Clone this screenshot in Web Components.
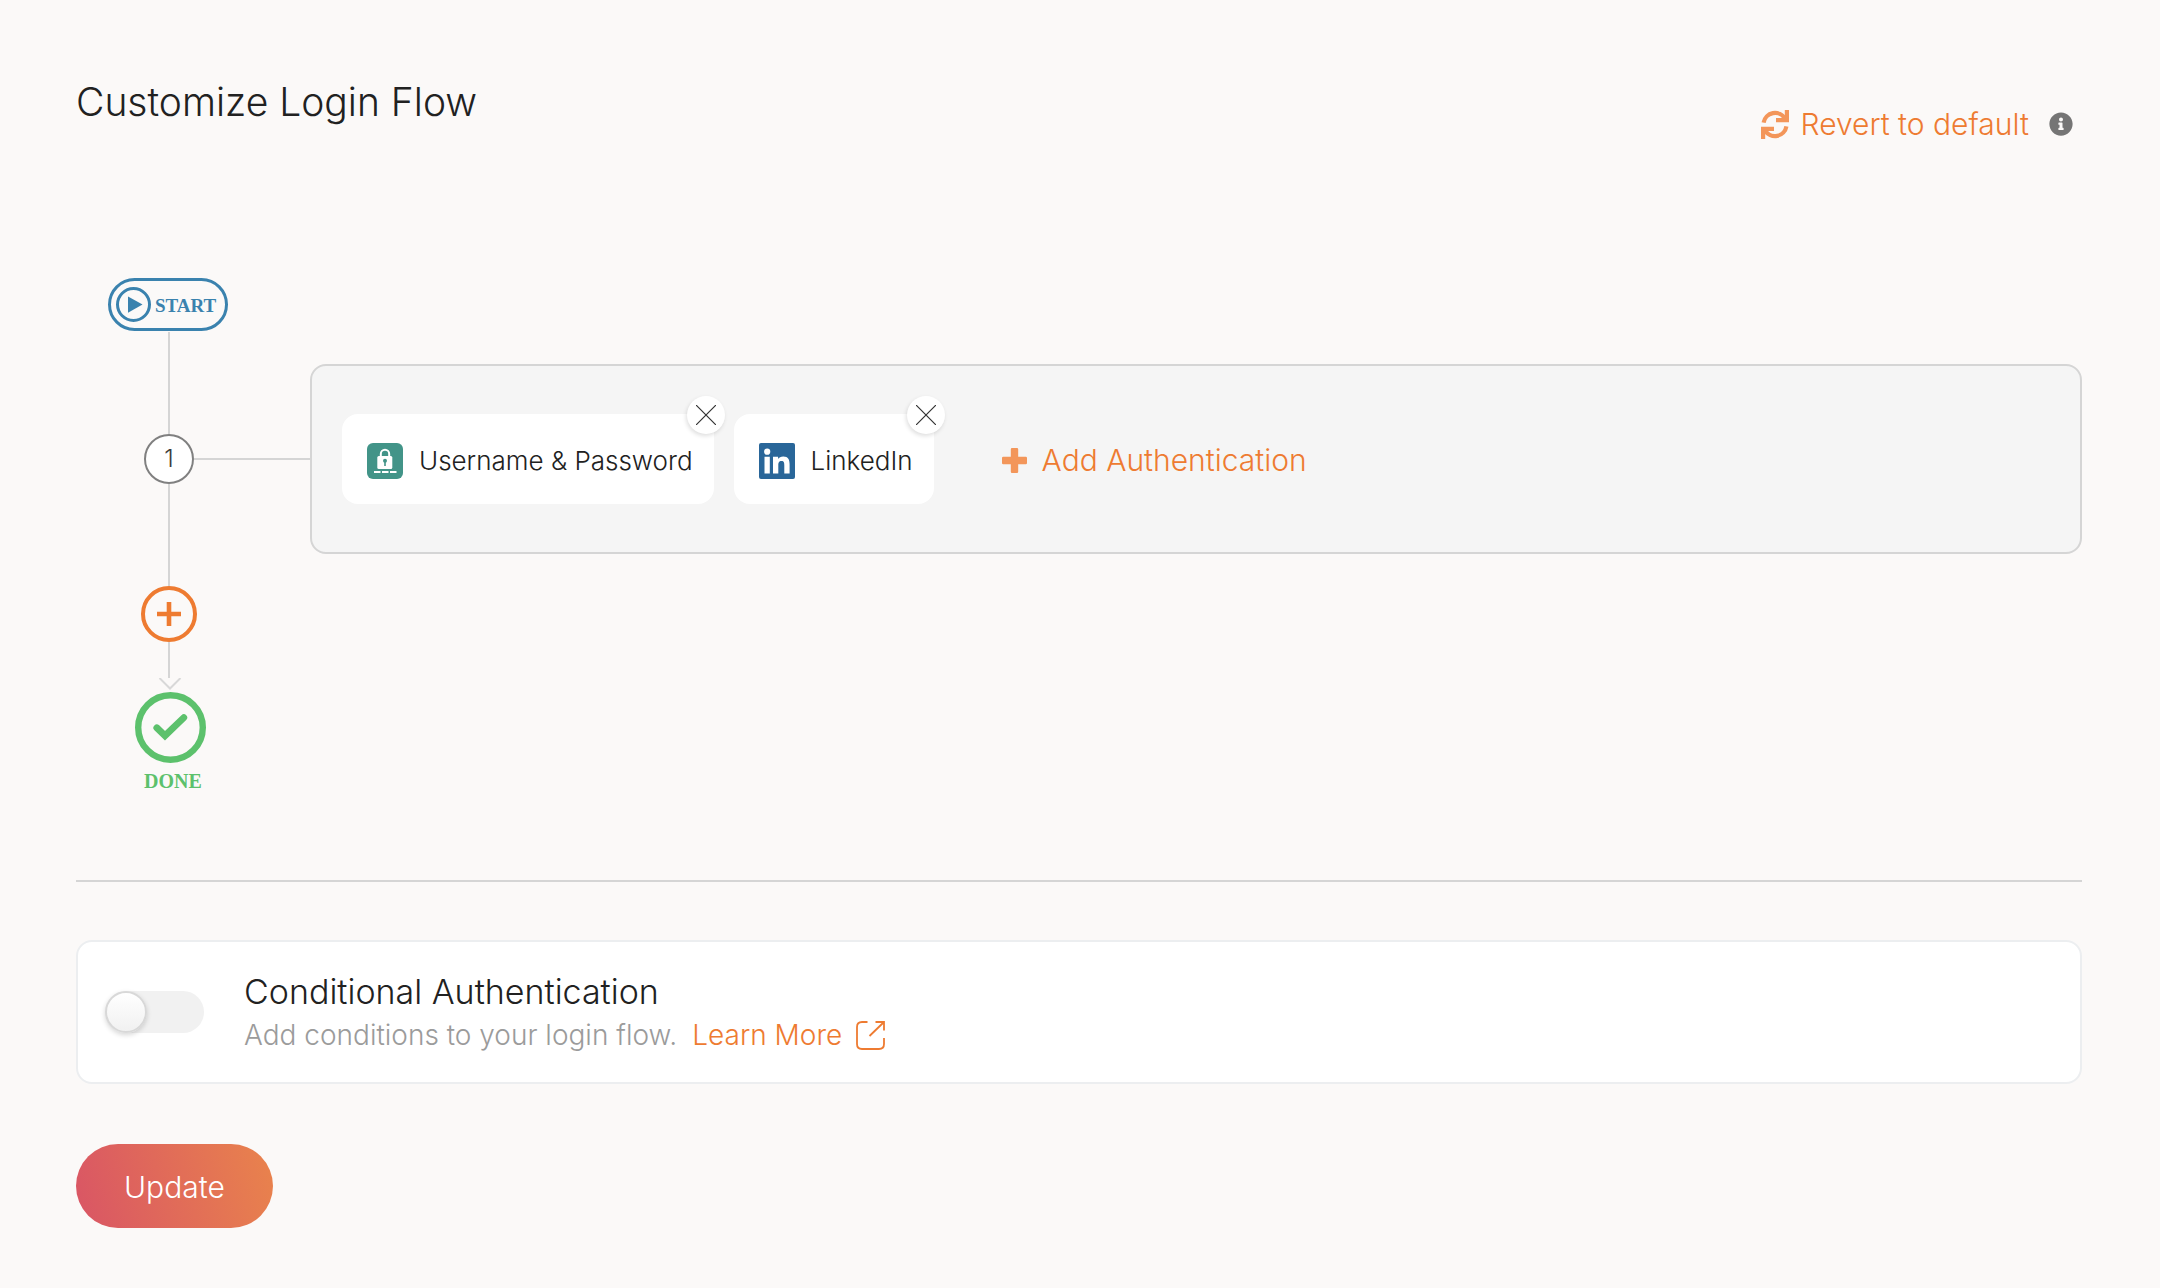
<!DOCTYPE html>
<html lang="en">
<head>
<meta charset="utf-8">
<title>Customize Login Flow</title>
<style>
  body {
    margin: 0;
    background: #fbf9f8;
    color: #212121;
    font-family: Inter, "Noto Sans", sans-serif;
    font-weight: 300;
    --accent: #ee7b31;
    --line: #d5d5d5;
  }
</style>
</head>
<body>
<login-flow-page></login-flow-page>
<script>
const define = (name, html, setup) => {
  const template = document.createElement('template');
  template.innerHTML = `<style>
    * { box-sizing: border-box; }
    button { font: inherit; color: inherit; background: none; border: 0; padding: 0; margin: 0; cursor: pointer; }
    svg { display: block; flex: none; }
  </style>` + html;
  customElements.define(name, class extends HTMLElement {
    constructor() {
      super();
      this.attachShadow({ mode: 'open' }).append(template.content.cloneNode(true));
      if (setup) setup(this.shadowRoot, this);
    }
  });
};

define('page-header', `
  <style>
    :host { display: flex; justify-content: space-between; align-items: flex-start; }
    h1 { margin: 0; font-size: 39px; line-height: 48px; font-weight: 300; }
    .actions { display: flex; align-items: center; gap: 20px; padding: 28px 9px 0 0; color: var(--accent); }
    .revert { display: flex; align-items: center; gap: 12px; font-size: 30px; line-height: 36px; }
    .info { color: #757575; }
  </style>
  <h1><slot></slot></h1>
  <div class="actions">
    <button class="revert" type="button">
      <svg width="28" height="29" viewBox="0 0 28 29" fill="none" stroke="#f3965a" stroke-width="4.2">
        <path d="M2.600 12.600A11.600 11.600 0 0 1 24 8.600M25.900 0V10.200H15"/>
        <path transform="rotate(180 14 14.5)" d="M2.600 12.600A11.600 11.600 0 0 1 24 8.600M25.900 0V10.200H15"/>
      </svg>
      <span>Revert to default</span>
    </button>
    <button class="info" type="button" aria-label="About reverting">
      <svg width="24" height="24" viewBox="0 0 512 512" fill="currentColor"><path d="M256 8C119.043 8 8 119.083 8 256c0 136.997 111.043 248 248 248s248-111.003 248-248C504 119.083 392.957 8 256 8zm0 110c23.196 0 42 18.804 42 42s-18.804 42-42 42-42-18.804-42-42 18.804-42 42-42zm56 254c0 6.627-5.373 12-12 12h-88c-6.627 0-12-5.373-12-12v-24c0-6.627 5.373-12 12-12h12v-64h-12c-6.627 0-12-5.373-12-12v-24c0-6.627 5.373-12 12-12h64c6.627 0 12 5.373 12 12v100h12c6.627 0 12 5.373 12 12v24z"/></svg>
    </button>
  </div>`);

define('flow-start', `
  <style>
    :host { display: flex; align-items: center; gap: 4px; width: 120px; height: 53px; padding-left: 5px;
      border: 3px solid #3a82ae; border-radius: 27px; color: #3a82ae;
      font: bold 19px/24px "Liberation Serif", serif; box-sizing: border-box; }
    span { padding-top: 3px; }
  </style>
  <svg width="35" height="35" viewBox="0 0 35 35"><circle cx="17.500" cy="17.500" r="16" fill="none" stroke="currentColor" stroke-width="3"/><path d="M12 9.500 26.500 17.500 12 25.800Z" fill="currentColor"/></svg>
  <span><slot></slot></span>`);

define('flow-step', `
  <style>
    :host { display: flex; align-items: center; }
    .rail { display: flex; flex-direction: column; align-items: center; }
    .line { width: 2px; height: 102px; background: var(--line); }
    .number { width: 50px; height: 50px; border: 2px solid #808080; border-radius: 50%; background: #fff;
      display: flex; align-items: center; justify-content: center; font-size: 24px; line-height: 32px; color: #3c3c3c; }
    .link { width: 116px; height: 2px; background: var(--line); flex: none; }
    .panel { flex: 1; min-width: 0; display: flex; align-items: center; gap: 20px; padding: 48px 30px;
      border: 2px solid var(--line); border-radius: 16px; background: #f5f5f5; }
  </style>
  <div class="rail"><div class="line"></div><div class="number"></div><div class="line"></div></div>
  <div class="link"></div>
  <div class="panel"><slot></slot></div>`,
  (root, host) => { root.querySelector('.number').textContent = host.getAttribute('number'); });

define('auth-card', `
  <style>
    :host { display: flex; align-items: center; gap: 16px; height: 90px; padding: 4px 21px 0 25px; border-radius: 16px;
      background: #fff; font-size: 26px; line-height: 32px; position: relative; white-space: nowrap; box-sizing: border-box; }
    .remove { position: absolute; top: -18px; right: -11px; width: 38px; height: 38px; border-radius: 50%;
      background: #fff; box-shadow: -1px 2px 4px rgba(0,0,0,.13); display: flex; align-items: center; justify-content: center; }
  </style>
  <slot name="icon"></slot>
  <span><slot></slot></span>
  <button class="remove" type="button" aria-label="Remove">
    <svg width="20" height="20" viewBox="0 0 20 20" stroke="#333" stroke-width="1.2"><path d="M0 0 20 20M20 0 0 20"/></svg>
  </button>`);

define('add-authentication', `
  <style>
    :host { display: block; margin-left: 48px; }
    button { display: flex; align-items: center; gap: 15px; padding-top: 2px; color: var(--accent); font-size: 30px; line-height: 36px; }
  </style>
  <button type="button">
    <svg width="25" height="25" viewBox="0 0 25 25" fill="#f3965a"><path d="M10 0h5q1.200 0 1.200 1.200V8.800h7.600q1.200 0 1.200 1.200v5q0 1.200-1.200 1.200h-7.600v7.600q0 1.200-1.200 1.200h-5q-1.200 0-1.200-1.200v-7.600H1.200Q0 16.200 0 15v-5q0-1.200 1.200-1.200h7.600V1.200Q8.800 0 10 0Z"/></svg>
    <span><slot></slot></span>
  </button>`);

define('flow-end', `
  <style>
    :host { display: flex; flex-direction: column; align-items: center; }
    .line { width: 2px; height: 36px; background: var(--line); }
    .add { width: 56px; height: 56px; border: 4px solid var(--accent); border-radius: 50%;
      display: flex; align-items: center; justify-content: center; color: var(--accent); }
    .end { display: flex; flex-direction: column; align-items: center; gap: 2px; padding-left: 2px; }
    .label { font: bold 20px/24px "Liberation Serif", serif; color: #5cc16c; padding: 4px 0 0 6px; }
  </style>
  <button class="add" type="button" aria-label="Add step">
    <svg width="24" height="24" viewBox="0 0 24 24" stroke="currentColor" stroke-width="4.600"><path d="M12 0V24M0 12H24"/></svg>
  </button>
  <div class="line"></div>
  <div class="end">
    <svg width="24" height="12" viewBox="0 0 24 12" fill="none" stroke="#d8d8d8" stroke-width="2"><path d="M1.500 0 12 10.500 22.500 0"/></svg>
    <svg width="71" height="71" viewBox="0 0 71 71" fill="none" stroke="#5cc16c"><circle cx="35.500" cy="35.500" r="32.300" stroke-width="6.400"/><path d="M21.800 35.800 30 43.800 48.800 25.600" stroke-width="6.800" stroke-linecap="round"/></svg>
    <div class="label"><slot></slot></div>
  </div>`);

define('toggle-switch', `
  <style>
    :host { display: block; }
    input { appearance: none; display: flex; margin: 0; width: 99px; height: 42px; border-radius: 21px; background: #f1f1f1; cursor: pointer; }
    input::before { content: ""; width: 42px; height: 42px; border-radius: 50%; border: 2px solid #d8d8d8; box-sizing: border-box;
      background: linear-gradient(#fff, #f1f1f1); box-shadow: 0 2px 5px rgba(0,0,0,.16); }
    input:checked { justify-content: flex-end; background: var(--accent); }
  </style>
  <input type="checkbox" role="switch" aria-label="Conditional Authentication">`);

define('option-card', `
  <style>
    :host { display: flex; align-items: center; gap: 40px; height: 144px; padding: 0 27px; background: #fff;
      border: 2px solid #eceef0; border-radius: 16px; box-sizing: border-box; }
    .text { padding-top: 4px; }
    h2 { margin: 0; font-size: 34px; line-height: 42px; font-weight: 300; }
    p { margin: 0; font-size: 28px; line-height: 44px; color: #9b9b9b; display: flex; align-items: center; gap: 15px; }
    a { color: var(--accent); text-decoration: none; display: flex; align-items: center; gap: 14px; }
  </style>
  <toggle-switch></toggle-switch>
  <div class="text">
    <h2><slot name="title"></slot></h2>
    <p><slot></slot>
      <a href="#learn-more"><span>Learn More</span>
        <svg width="29" height="29" viewBox="0 0 29 29" fill="none" stroke="currentColor" stroke-width="1.800"><path d="M11.500 1H6Q1 1 1 6V23Q1 28 6 28H23Q28 28 28 23V17M19.500 1H28V9.500M28 1 13.500 15"/></svg>
      </a>
    </p>
  </div>`);

define('primary-button', `
  <style>
    :host { display: block; }
    button { height: 84px; padding: 2px 48px 0; border-radius: 42px; color: #fff; font-size: 30px; line-height: 36px;
      background: linear-gradient(75deg, #d95565, #e9834c); }
  </style>
  <button type="button"><slot></slot></button>`);

define('login-flow-page', `
  <style>
    :host { display: block; padding: 78px 78px 60px 76px; }
    .flow { margin-top: 136px; padding-left: 68px; }
    flow-start { margin: 0 0 1px -36px; }
    flow-end { width: 74px; margin-left: -12px; }
    hr { border: 0; height: 2px; background: var(--line); margin: 87px 0 58px; }
    primary-button { margin-top: 60px; }
  </style>
  <page-header>Customize Login Flow</page-header>
  <div class="flow">
    <flow-start>START</flow-start>
    <flow-step number="1">
      <auth-card>
        <svg slot="icon" width="36" height="36" viewBox="0 0 36 36"><rect width="36" height="36" rx="6" fill="#429488"/><path d="M13.800 14V11a4.200 4.200 0 0 1 8.400 0v3" fill="none" stroke="#fff" stroke-width="2"/><rect x="10.300" y="13" width="15" height="13" rx="1.500" fill="#fff"/><circle cx="18" cy="17.800" r="2" fill="#429488"/><path d="M17.200 18h1.600v5h-1.600z" fill="#429488"/><path d="M7 29h6.500M15 29h6.500M23 29h6.500" stroke="#fff" stroke-width="1.800"/></svg>
        Username &amp; Password
      </auth-card>
      <auth-card>
        <svg slot="icon" width="36" height="36" viewBox="0 0 36 36"><rect width="36" height="36" rx="2" fill="#296699"/><g fill="#fff"><circle cx="8.200" cy="8.700" r="3.100"/><path d="M5.500 13.800h5.300V30.500H5.500zM14 13.800h5.100v2.300c.9-1.600 2.700-2.700 5.200-2.700 5 0 6.300 3.200 6.300 7.900v9.200h-5.300v-8.300c0-2-.2-4.200-2.800-4.200-2.700 0-3.200 2-3.200 4.100v8.400H14z"/></g></svg>
        LinkedIn
      </auth-card>
      <add-authentication>Add Authentication</add-authentication>
    </flow-step>
    <flow-end>DONE</flow-end>
  </div>
  <hr>
  <option-card>
    <span slot="title">Conditional Authentication</span>
    <span>Add conditions to your login flow.</span>
  </option-card>
  <primary-button>Update</primary-button>`);
</script>
</body>
</html>
